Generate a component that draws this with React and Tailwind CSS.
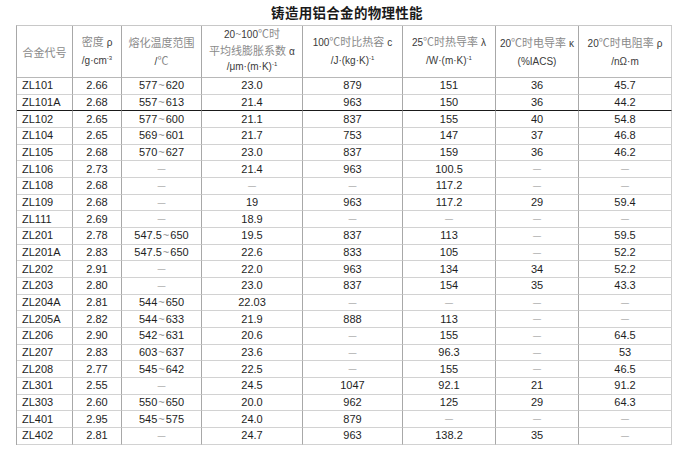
import React from "react";

const rows = [
  ["ZL101", "2.66", "577~620", "23.0", "879", "151", "36", "45.7"],
  ["ZL101A", "2.68", "557~613", "21.4", "963", "150", "36", "44.2"],
  ["ZL102", "2.65", "577~600", "21.1", "837", "155", "40", "54.8"],
  ["ZL104", "2.65", "569~601", "21.7", "753", "147", "37", "46.8"],
  ["ZL105", "2.68", "570~627", "23.0", "837", "159", "36", "46.2"],
  ["ZL106", "2.73", "-", "21.4", "963", "100.5", "-", "-"],
  ["ZL108", "2.68", "-", "-", "-", "117.2", "-", "-"],
  ["ZL109", "2.68", "-", "19", "963", "117.2", "29", "59.4"],
  ["ZL111", "2.69", "-", "18.9", "-", "-", "-", "-"],
  ["ZL201", "2.78", "547.5~650", "19.5", "837", "113", "-", "59.5"],
  ["ZL201A", "2.83", "547.5~650", "22.6", "833", "105", "-", "52.2"],
  ["ZL202", "2.91", "-", "22.0", "963", "134", "34", "52.2"],
  ["ZL203", "2.80", "-", "23.0", "837", "154", "35", "43.3"],
  ["ZL204A", "2.81", "544~650", "22.03", "-", "-", "-", "-"],
  ["ZL205A", "2.82", "544~633", "21.9", "888", "113", "-", "-"],
  ["ZL206", "2.90", "542~631", "20.6", "-", "155", "-", "64.5"],
  ["ZL207", "2.83", "603~637", "23.6", "-", "96.3", "-", "53"],
  ["ZL208", "2.77", "545~642", "22.5", "-", "155", "-", "46.5"],
  ["ZL301", "2.55", "-", "24.5", "1047", "92.1", "21", "91.2"],
  ["ZL303", "2.60", "550~650", "20.0", "962", "125", "29", "64.3"],
  ["ZL401", "2.95", "545~575", "24.0", "879", "-", "-", "-"],
  ["ZL402", "2.81", "-", "24.7", "963", "138.2", "35", "-"],
];

const cjk = "font-['Noto_Sans_CJK_SC',sans-serif] text-[11px] text-[#8a8a8a]";
const lat = "font-['Liberation_Sans',Arial,sans-serif] text-[10px] text-[#3a3a3a]";

function C({ children }) {
  return <span className={cjk}>{children}</span>;
}
function L({ children, sp }) {
  return <span className={lat + (sp ? " pl-[3px]" : "")}>{children}</span>;
}
function Sup({ children }) {
  return (
    <span className="font-['Liberation_Sans',Arial,sans-serif] text-[6px] text-[#3a3a3a] relative -top-[4px]">
      {children}
    </span>
  );
}

function Value({ v }) {
  if (v === "-") {
    return <span className="text-[8px] text-[#8a8a8a] font-['Liberation_Sans',Arial,sans-serif]">—</span>;
  }
  if (v.includes("~")) {
    const [a, b] = v.split("~");
    return (
      <span>
        {a}
        <span className="text-[#8a8a8a] px-[1px]">~</span>
        {b}
      </span>
    );
  }
  return <span>{v}</span>;
}

const headers = [
  { lh: "", lines: [[<C key="a">合金代号</C>]] },
  {
    lh: "leading-[18px]",
    lines: [
      [<C key="a">密度</C>, <L key="b" sp>ρ</L>],
      [<L key="a">/g·cm</L>, <Sup key="b">-3</Sup>],
    ],
  },
  {
    lh: "leading-[18px]",
    lines: [[<C key="a">熔化温度范围</C>], [<L key="a">/</L>, <C key="b">℃</C>]],
  },
  {
    lh: "leading-[15.5px]",
    lines: [
      [<L key="a">20</L>, <C key="b">~</C>, <L key="c">100</L>, <C key="d">℃时</C>],
      [<C key="a">平均线膨胀系数</C>, <L key="b" sp>α</L>],
      [<L key="a">/μm·(m·K)</L>, <Sup key="b">-1</Sup>],
    ],
  },
  {
    lh: "leading-[18px]",
    lines: [
      [<L key="a">100</L>, <C key="b">℃时比热容</C>, <L key="c" sp>c</L>],
      [<L key="a">/J·(kg·K)</L>, <Sup key="b">-1</Sup>],
    ],
  },
  {
    lh: "leading-[18px]",
    lines: [
      [<L key="a">25</L>, <C key="b">℃时热导率</C>, <L key="c" sp>λ</L>],
      [<L key="a">/W·(m·K)</L>, <Sup key="b">-1</Sup>],
    ],
  },
  {
    lh: "leading-[18px]",
    lines: [
      [<L key="a">20</L>, <C key="b">℃时电导率</C>, <L key="c" sp>κ</L>],
      [<L key="a">(%IACS)</L>],
    ],
  },
  {
    lh: "leading-[18px]",
    lines: [
      [<L key="a">20</L>, <C key="b">℃时电阻率</C>, <L key="c" sp>ρ</L>],
      [<L key="a">/nΩ·m</L>],
    ],
  },
];

export default function App() {
  return (
    <div className="w-[692px] h-[457px] bg-white overflow-hidden">
      <div className="h-[25px] flex items-center justify-center pl-[2px]">
        <span className="font-['Noto_Sans_CJK_SC',sans-serif] font-bold text-[13.5px] text-[#1a1a1a] leading-none tracking-[0.3px]">
          铸造用铝合金的物理性能
        </span>
      </div>
      <div className="ml-[16px] w-[656px] border-l border-t border-l-[#a8a8a8] border-t-[#c8c8c8] grid grid-cols-[56px_49px_80px_101px_100px_93px_83px_93px]">
        {headers.map((h, i) => (
          <div
            key={"h" + i}
            className={
              "h-[52px] border-b border-r border-b-[#b8b8b8] flex flex-col items-center justify-center whitespace-nowrap " +
              (i === 7 ? "border-r-[#cccccc] " : "border-r-[#a8a8a8] ") +
              (h.lh || "leading-[18px]")
            }
          >
            {h.lines.map((ln, j) => (
              <div key={j} className="flex items-baseline">
                {ln}
              </div>
            ))}
          </div>
        ))}
        {rows.map((r, ri) =>
          r.map((v, ci) => (
            <div
              key={ri + "-" + ci}
              className={
                "h-[16.68px] border-b border-r flex items-center whitespace-nowrap font-['Liberation_Sans',Arial,sans-serif] text-[11px] text-[#1e1e1e] leading-none " +
                (ri === 1 ? "border-b-[#1a1a1a] " : "border-b-[#d2d2d2] ") +
                (ci === 7 ? "border-r-[#cccccc] " : "border-r-[#a8a8a8] ") +
                (ci === 0 ? "justify-start pl-[5px]" : "justify-center")
              }
            >
              <Value v={v} />
            </div>
          ))
        )}
      </div>
    </div>
  );
}
